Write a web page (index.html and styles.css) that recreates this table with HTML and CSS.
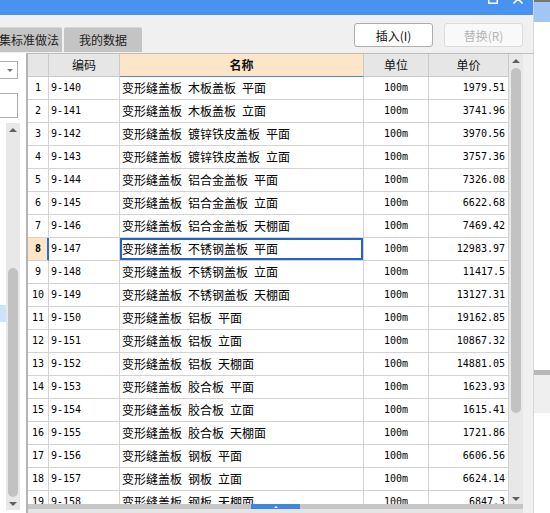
FILE: index.html
```html
<!DOCTYPE html>
<html lang="zh">
<head>
<meta charset="utf-8">
<title>定额库</title>
<link rel="stylesheet" href="styles.css">
</head>
<body>
<div class="screen">
  <div class="window">
    <div class="titlebar">
      <svg class="tb-icon" width="10" height="10" viewBox="0 0 10 10"><rect x="0.75" y="0.75" width="8.5" height="8.5" fill="none" stroke="#fff" stroke-width="1.5"/></svg>
      <svg class="tb-icon" width="10" height="10" viewBox="0 0 10 10"><path d="M0.5 0.5 L9.5 9.5 M9.5 0.5 L0.5 9.5" stroke="#fff" stroke-width="1.6"/></svg>
    </div>
    <div class="toolbar">
      <div class="tabs">
        <div class="tab tab-cut">图集标准做法</div>
        <div class="tab">我的数据</div>
      </div>
      <div class="buttons">
        <button class="btn">插入(I)</button>
        <button class="btn btn-disabled">替换(R)</button>
      </div>
    </div>
    <div class="content">
      <div class="side">
        <div class="combo"><span class="caret"></span></div>
        <div class="textbox"></div>
        <div class="list">
          <div class="list-items"><div class="list-sel"></div></div>
          <div class="vscroll small">
            <span class="arrow up"></span>
            <div class="track"><span class="thumb"></span></div>
            <span class="arrow down"></span>
          </div>
        </div>
      </div>
      <div class="main">
        <div class="gridwrap">
          <div class="grid">
            <div class="row head">
              <div class="c num"></div>
              <div class="c">编码</div>
              <div class="c name-h">名称</div>
              <div class="c">单位</div>
              <div class="c">单价</div>
            </div>
            <div class="row"><div class="c num">1</div><div class="c code">9-140</div><div class="c name">变形缝盖板 木板盖板 平面</div><div class="c unit">100m</div><div class="c price">1979.51</div></div>
            <div class="row"><div class="c num">2</div><div class="c code">9-141</div><div class="c name">变形缝盖板 木板盖板 立面</div><div class="c unit">100m</div><div class="c price">3741.96</div></div>
            <div class="row"><div class="c num">3</div><div class="c code">9-142</div><div class="c name">变形缝盖板 镀锌铁皮盖板 平面</div><div class="c unit">100m</div><div class="c price">3970.56</div></div>
            <div class="row"><div class="c num">4</div><div class="c code">9-143</div><div class="c name">变形缝盖板 镀锌铁皮盖板 立面</div><div class="c unit">100m</div><div class="c price">3757.36</div></div>
            <div class="row"><div class="c num">5</div><div class="c code">9-144</div><div class="c name">变形缝盖板 铝合金盖板 平面</div><div class="c unit">100m</div><div class="c price">7326.08</div></div>
            <div class="row"><div class="c num">6</div><div class="c code">9-145</div><div class="c name">变形缝盖板 铝合金盖板 立面</div><div class="c unit">100m</div><div class="c price">6622.68</div></div>
            <div class="row"><div class="c num">7</div><div class="c code">9-146</div><div class="c name">变形缝盖板 铝合金盖板 天棚面</div><div class="c unit">100m</div><div class="c price">7469.42</div></div>
            <div class="row"><div class="c num cur">8</div><div class="c code">9-147</div><div class="c name sel">变形缝盖板 不锈钢盖板 平面</div><div class="c unit">100m</div><div class="c price">12983.97</div></div>
            <div class="row"><div class="c num">9</div><div class="c code">9-148</div><div class="c name">变形缝盖板 不锈钢盖板 立面</div><div class="c unit">100m</div><div class="c price">11417.5</div></div>
            <div class="row"><div class="c num">10</div><div class="c code">9-149</div><div class="c name">变形缝盖板 不锈钢盖板 天棚面</div><div class="c unit">100m</div><div class="c price">13127.31</div></div>
            <div class="row"><div class="c num">11</div><div class="c code">9-150</div><div class="c name">变形缝盖板 铝板 平面</div><div class="c unit">100m</div><div class="c price">19162.85</div></div>
            <div class="row"><div class="c num">12</div><div class="c code">9-151</div><div class="c name">变形缝盖板 铝板 立面</div><div class="c unit">100m</div><div class="c price">10867.32</div></div>
            <div class="row"><div class="c num">13</div><div class="c code">9-152</div><div class="c name">变形缝盖板 铝板 天棚面</div><div class="c unit">100m</div><div class="c price">14881.05</div></div>
            <div class="row"><div class="c num">14</div><div class="c code">9-153</div><div class="c name">变形缝盖板 胶合板 平面</div><div class="c unit">100m</div><div class="c price">1623.93</div></div>
            <div class="row"><div class="c num">15</div><div class="c code">9-154</div><div class="c name">变形缝盖板 胶合板 立面</div><div class="c unit">100m</div><div class="c price">1615.41</div></div>
            <div class="row"><div class="c num">16</div><div class="c code">9-155</div><div class="c name">变形缝盖板 胶合板 天棚面</div><div class="c unit">100m</div><div class="c price">1721.86</div></div>
            <div class="row"><div class="c num">17</div><div class="c code">9-156</div><div class="c name">变形缝盖板 钢板 平面</div><div class="c unit">100m</div><div class="c price">6606.56</div></div>
            <div class="row"><div class="c num">18</div><div class="c code">9-157</div><div class="c name">变形缝盖板 钢板 立面</div><div class="c unit">100m</div><div class="c price">6624.14</div></div>
            <div class="row"><div class="c num">19</div><div class="c code">9-158</div><div class="c name">变形缝盖板 钢板 天棚面</div><div class="c unit">100m</div><div class="c price">6847.3</div></div>
          </div>
          <div class="vscroll big">
            <span class="arrow up"></span>
            <div class="track"><span class="thumb"></span></div>
            <span class="arrow down"></span>
          </div>
        </div>
        <div class="hsplit"><span class="handle"></span></div>
      </div>
    </div>
  </div>
  <div class="behind">
    <div class="b-top"></div>
    <div class="b-blue"></div>
    <div class="b-white"></div>
    <div class="b-bar"></div>
    <div class="b-panel"></div>
  </div>
</div>
</body>
</html>
```
FILE: styles.css
```css
* { box-sizing: border-box; }
html, body { margin: 0; padding: 0; background: #fff; }
body {
  font-family: "Noto Sans CJK SC", "Liberation Sans", sans-serif;
  font-size: 12px;
  color: #000;
}
.screen {
  width: 550px;
  height: 513px;
  overflow: hidden;
  display: flex;
}
.window {
  width: 533px;
  flex: none;
  display: flex;
  flex-direction: column;
  background: #f0f0f0;
}
.titlebar {
  height: 15px;
  flex: none;
  background: #4793ef;
  display: flex;
  justify-content: flex-end;
  align-items: flex-start;
  gap: 15px;
  padding-right: 10px;
  overflow: hidden;
}
.tb-icon { margin-top: -6px; display: block; }

.toolbar {
  height: 38px;
  flex: none;
  display: flex;
  justify-content: space-between;
  align-items: flex-start;
}
.tabs {
  align-self: flex-end;
  display: flex;
  gap: 2px;
  margin-bottom: 1px;
}
.tab {
  height: 25px;
  line-height: 24px;
  background: #c4c4c4;
  border-top: 1px solid #d6d6d6;
  border-radius: 2px 2px 0 0;
  color: #222;
  font-size: 12px;
  width: 78px;
  text-align: center;
  white-space: nowrap;
}
.tab-cut {
  width: 80px;
  margin-left: -18px;
  text-align: right;
  padding-right: 3px;
}
.buttons {
  display: flex;
  gap: 11px;
  margin-top: 8px;
  margin-right: 10px;
}
.btn {
  width: 79px;
  height: 24px;
  padding: 0;
  background: #fff;
  border: 1px solid #adadad;
  border-radius: 3px;
  font-family: "Noto Sans CJK SC", sans-serif;
  font-size: 12px;
  color: #111;
}
.btn-disabled {
  background: #f9f9f9;
  border-color: #dcdcdc;
  color: #b4b4b4;
}

.content {
  flex: 1;
  display: flex;
  min-height: 0;
}
.side {
  width: 26px;
  flex: none;
  background: #fff;
  display: flex;
  flex-direction: column;
  padding-top: 8px;
  overflow: hidden;
}
.combo {
  width: 38px;
  height: 18px;
  margin-left: -20px;
  border: 1px solid #abadb3;
  background: #fff;
  display: flex;
  justify-content: flex-end;
  align-items: center;
  padding-right: 4px;
  flex: none;
}
.caret {
  width: 0;
  height: 0;
  border-left: 3px solid transparent;
  border-right: 3px solid transparent;
  border-top: 3px solid #777;
}
.textbox {
  width: 38px;
  height: 25px;
  margin-left: -20px;
  margin-top: 14px;
  border: 1px solid #abadb3;
  background: #fff;
  flex: none;
}
.list {
  margin-top: 5px;
  height: 387px;
  display: flex;
  flex: none;
}
.list-items {
  width: 6px;
  background: #fff;
  padding-top: 182px;
}
.list-sel {
  height: 17px;
  background: #cce4fb;
}

.vscroll {
  width: 14px;
  flex: none;
  background: #e8e8e8;
  display: flex;
  flex-direction: column;
}
.arrow {
  height: 13px;
  flex: none;
  display: flex;
  justify-content: center;
  align-items: center;
}
.arrow::before {
  content: "";
  width: 0;
  height: 0;
  border-left: 4px solid transparent;
  border-right: 4px solid transparent;
}
.arrow.up::before { border-bottom: 4px solid #606060; }
.arrow.down::before { border-top: 4px solid #606060; }
.track {
  flex: 1;
  display: flex;
  flex-direction: column;
  align-items: center;
}
.thumb {
  width: 10px;
  background: #c2c2c2;
  border-radius: 5px;
  display: block;
}
.small .thumb { margin-top: 132px; height: 229px; }
.big .thumb { margin-top: 1px; height: 345px; }

.main {
  flex: 1;
  display: flex;
  flex-direction: column;
  border-left: 2px solid #b4b4b4;
  min-width: 0;
}
.gridwrap {
  height: 451px;
  flex: none;
  display: flex;
  padding-right: 10px;
  border-top: 1px solid #bdbdbd;
}
.grid {
  width: 481px;
  flex: none;
  background: #fff;
  overflow: hidden;
}
.row {
  display: grid;
  grid-template-columns: 21px 71px 244px 65px 80px;
  height: 23px;
}
.c {
  border-right: 1px solid #d3d3d3;
  border-bottom: 1px solid #d3d3d3;
  line-height: 22px;
  height: 23px;
  white-space: nowrap;
  overflow: hidden;
  padding: 0 2px;
}
.head .c {
  background: #e6e6e6;
  text-align: center;
  font-size: 12px;
  color: #111;
  border-color: #cacaca;
}
.head .name-h {
  background: #fde5c8;
  font-weight: bold;
  border-bottom-color: #4f87cc;
}
.num {
  text-align: center;
  padding: 0;
  font-family: "DejaVu Sans Mono", "Liberation Mono", monospace;
  font-size: 10px;
}
.num.cur {
  background: #fde5c8;
  font-weight: bold;
  border-right-color: #2b6fcf;
  box-shadow: inset -1px 0 0 #2b6fcf;
}
.code, .unit, .price {
  font-family: "DejaVu Sans Mono", "Liberation Mono", monospace;
  font-size: 10px;
}
.unit { text-align: center; }
.price { text-align: right; padding-right: 3px; }
.name {
  font-size: 12px;
  word-spacing: 3.3px;
  padding-left: 2px;
}
.name.sel {
  box-shadow: inset 0 0 0 2px #2464c8;
}

.big { height: 451px; }

.hsplit {
  height: 9px;
  width: 495px;
  flex: none;
  background: linear-gradient(#c6c6c6 0 5px, #e4e4e4 5px);
  display: flex;
  justify-content: center;
}
.handle {
  width: 49px;
  height: 5px;
  background: #3f86e0;
  display: flex;
  justify-content: center;
  align-items: center;
}
.handle::before {
  content: "";
  width: 0;
  height: 0;
  border-left: 2px solid transparent;
  border-right: 2px solid transparent;
  border-bottom: 2px solid #fff;
}

.behind {
  flex: 1;
  display: flex;
  flex-direction: column;
  border-left: 1px solid #d6d6d6;
  background: #fff;
}
.b-top { height: 2px; background: #767676; }
.b-blue { height: 20px; background: #a3c5f3; }
.b-white { height: 348px; background: #fff; }
.b-bar { height: 5px; background: #b8b8b8; }
.b-panel { height: 38px; background: #efefef; }
```
